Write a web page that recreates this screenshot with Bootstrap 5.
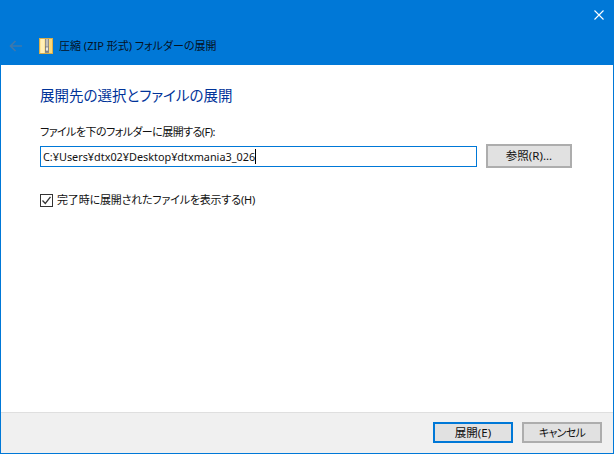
<!DOCTYPE html>
<html lang="ja">
<head>
<meta charset="utf-8">
<title>圧縮 (ZIP 形式) フォルダーの展開</title>
<link rel="stylesheet" href="https://cdn.jsdelivr.net/npm/bootstrap@5.3.0/dist/css/bootstrap.min.css">
<script src="https://cdn.jsdelivr.net/npm/bootstrap@5.3.0/dist/js/bootstrap.bundle.min.js"></script>
<style>
html,body{height:100%;margin:0;background:#fff;}
body,.win-btn,.path-box{font-family:"Noto Sans","Noto Sans CJK JP",sans-serif;font-size:11px;color:#111;}
.cjk{font-feature-settings:"palt";}
.win{width:614px;height:454px;border:1px solid #0078d7;border-top:0;}
.head{height:65px;background:#0078d7;}
.close-row{height:29px;padding-right:9px;}
.title-row{height:33px;padding-left:8px;}
.title-text{color:#06121f;font-size:11px;margin-left:6px;line-height:16px;}
.back-ic{margin-right:16px;}
.content{padding:20px 41px 0 39px;}
.main-head{color:#003399;font-size:14.5px;line-height:20px;margin:0 0 19px;font-weight:400;}
.lbl{line-height:16px;margin-bottom:6px;display:block;letter-spacing:-.55px;}
.path-row{gap:9px;}
.path-wrap{width:437px;height:21px;}
.path-box{width:437px;height:21px;border:1px solid #0078d7;border-radius:0;padding:0 2px;line-height:19px;font-size:10.85px;box-shadow:none;outline:0;}
.path-box:focus{border-color:#0078d7;box-shadow:none;}
.caret-mark{left:215px;top:3px;width:1px;height:15px;background:#000;}
.win-btn{border:2px solid #adadad;background:#e1e1e1;border-radius:0;padding:0;line-height:16px;font-size:11.5px;color:#111;}
.win-btn:hover{background:#e1e1e1;border-color:#adadad;color:#111;}
.browse{width:86px;height:24px;margin-top:-2px;}
.chk-row{margin-top:24px;}
.chk{width:13px;height:13px;border:1px solid #333;flex:none;margin-right:4px;}
.chk-label{line-height:16px;letter-spacing:-.17px;}
.foot{height:41px;background:#f0f0f0;border-top:1px solid #dfdfdf;padding:9px 11px 0 0;gap:9px;}
.act{width:80px;height:21px;}
.act-main{border-color:#0078d7;}
.act-cancel{font-size:11px;letter-spacing:-.7px;}
</style>
</head>
<body>
<div class="win d-flex flex-column">
  <header class="head">
    <div class="close-row d-flex justify-content-end align-items-center">
      <svg width="10" height="10" viewBox="0 0 10 10" aria-label="閉じる"><path d="M.5.5l9 9M9.5.5l-9 9" stroke="#fff" stroke-width="1.1" fill="none"/></svg>
    </div>
    <div class="title-row d-flex align-items-center">
      <svg class="back-ic" width="14" height="12" viewBox="0 0 14 12"><path d="M13 6H2M6.500 1 1.500 6l5 5" stroke="#3d78ad" stroke-width="1.700" fill="none"/></svg>
      <svg width="14" height="16" viewBox="0 0 14 16"><rect x=".5" y=".5" width="13" height="15" fill="#fbd977" stroke="#d9ae4a"/><rect x="1.500" y="1" width="4" height="14" fill="#fff0b8"/><rect x="6" y="1" width="4" height="14" fill="#8f8f8a"/><path d="M7 2h2M7 4h2M7 6h2M7 8h2" stroke="#eee" stroke-width="1"/><rect x="6.500" y="9" width="3" height="4" fill="#e8e8e4" stroke="#666" stroke-width=".6"/></svg>
      <span class="title-text cjk">圧縮 (ZIP 形式) フォルダーの展開</span>
    </div>
  </header>
  <main class="content flex-grow-1 bg-white">
    <h1 class="main-head cjk">展開先の選択とファイルの展開</h1>
    <label class="lbl cjk" for="dest">ファイルを下のフォルダーに展開する(F):</label>
    <div class="path-row d-flex align-items-start">
      <div class="path-wrap position-relative">
        <input id="dest" class="form-control path-box" type="text" value="C:¥Users¥dtx02¥Desktop¥dtxmania3_026">
        <span class="caret-mark position-absolute"></span>
      </div>
      <button type="button" class="btn win-btn browse cjk">参照(R)...</button>
    </div>
    <div class="chk-row d-flex align-items-center">
      <span class="chk d-flex align-items-center justify-content-center"><svg width="11" height="11" viewBox="0 0 11 11"><path d="M1.500 5.500 4.300 8.500 9.500 1.800" stroke="#333" stroke-width="1.300" fill="none"/></svg></span>
      <span class="chk-label cjk">完了時に展開されたファイルを表示する(H)</span>
    </div>
  </main>
  <footer class="foot d-flex justify-content-end align-items-start">
    <button type="button" class="btn win-btn act act-main cjk">展開(E)</button>
    <button type="button" class="btn win-btn act act-cancel cjk">キャンセル</button>
  </footer>
</div>
</body>
</html>
